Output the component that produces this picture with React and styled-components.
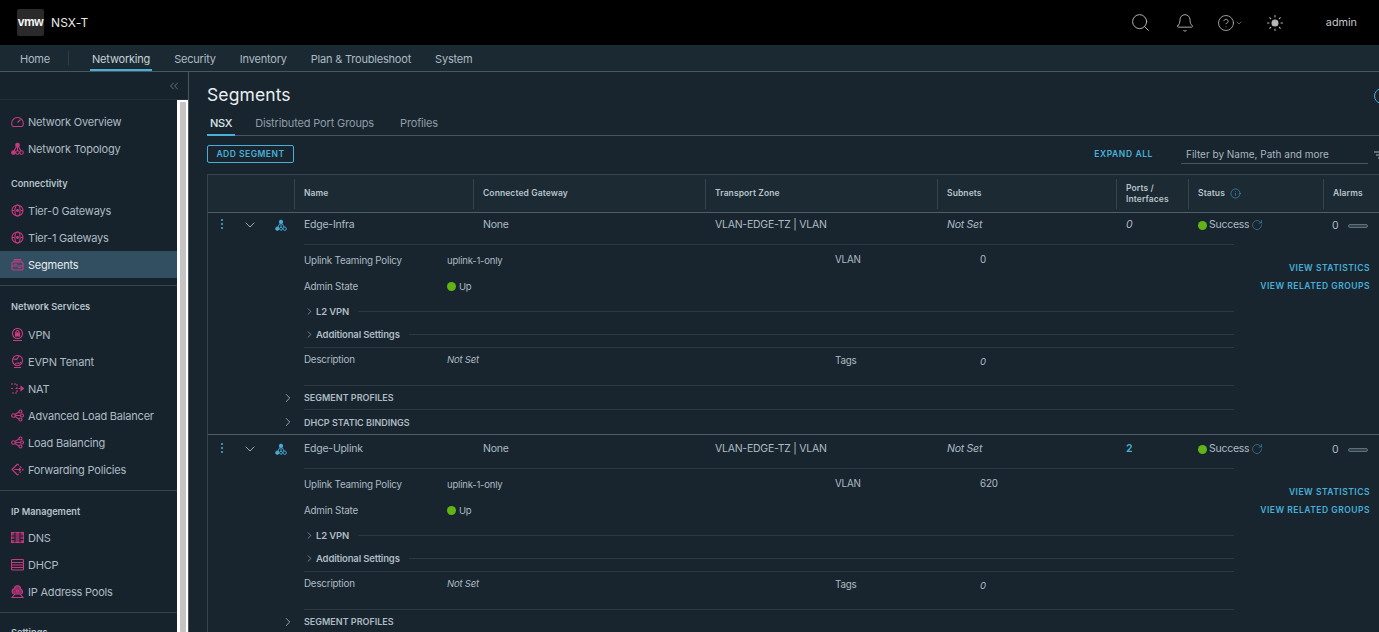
import React from "react";
import styled, { createGlobalStyle } from "styled-components";
import { Search, Bell, CircleHelp, Sun, ChevronDown, ChevronRight, ChevronsLeft, RotateCw, Info } from "lucide-react";

const Global = createGlobalStyle`
  html, body { margin: 0; padding: 0; height: 100%; overflow: hidden; background: #18252e; }
  * { box-sizing: border-box; }
  body { font-family: Inter, "Liberation Sans", sans-serif; color: #adbbc4; }
`;

const BLUE = "#49afd9";
const PINK = "#c63a80";

const Page = styled.div`display:flex;flex-direction:column;height:632px;width:1379px;overflow:hidden;`;
const TopBar = styled.header`height:45px;background:#000;display:flex;align-items:center;padding-left:17px;flex:none;`;
const Logo = styled.div`width:27px;height:27px;background:#2a2a2a;border-radius:2px;color:#f4f4f4;font:700 12px/27px "Liberation Sans",sans-serif;text-align:center;letter-spacing:-.4px;`;
const Product = styled.div`margin-left:7px;font-size:12px;color:#e8e8e8;letter-spacing:.1px;flex:1;`;
const TopIcon = styled.div`width:${p => p.$w}px;margin-left:${p => p.$gap || 0}px;display:flex;align-items:center;justify-content:center;color:#b8b8b8;flex:none;`;
const User = styled.div`font-size:10.8px;color:#c8c8c8;margin:0 22px 0 42px;flex:none;`;

const NavBar = styled.nav`height:27px;background:#1b2a32;border-bottom:1px solid #485660;display:flex;padding-left:20px;flex:none;`;
const NavItem = styled.div`
  position:relative;margin-right:${p => p.$gap}px;font-size:11px;letter-spacing:-.2px;line-height:28px;white-space:nowrap;color:${p => p.$active ? "#c6d2d9" : "#adbbc4"};
  ${p => p.$active && `&::after{content:"";position:absolute;left:-2px;right:-2px;bottom:0;height:2px;background:${BLUE};}`}
`;
const NavSep = styled.div`width:1px;height:14px;background:#2f3e47;margin:6px 23px 0 0;`;

const Body = styled.div`display:flex;flex:1;min-height:0;`;
const SideWrap = styled.aside`width:189px;flex:none;border-right:1px solid #485660;background:#17232c;display:flex;flex-direction:column;overflow:hidden;`;
const Collapse = styled.div`height:28px;flex:none;border-bottom:1px solid #233039;display:flex;justify-content:flex-end;align-items:center;padding-right:7px;color:#9aa9b3;`;
const SideBody = styled.div`flex:1;display:flex;min-height:0;`;
const SideList = styled.div`width:177px;flex:none;padding-top:8px;overflow:hidden;`;
const Track = styled.div`width:11px;background:#fff;padding:2px 2px 0 3px;flex:none;`;
const Thumb = styled.div`height:100%;background:#c4c4c4;border-radius:1px;`;
const Item = styled.div`
  height:27px;display:flex;align-items:center;padding-left:11px;font-size:11px;letter-spacing:-.2px;white-space:nowrap;
  color:${p => p.$active ? "#e6ecef" : "#adbbc4"};background:${p => p.$active ? "#324f62" : "transparent"};
`;
const ItemIcon = styled.svg`width:13px;height:13px;margin-right:4px;flex:none;fill:none;stroke:${PINK};stroke-width:1.1;`;
const GroupTitle = styled.div`height:${p => p.$h || 34}px;padding:${p => p.$pt || 12}px 0 0 11px;font-size:9.2px;font-weight:600;color:#b5c2ca;white-space:nowrap;`;
const Divider = styled.div`height:1px;background:#36444d;margin-top:${p => p.$top}px;`;

const Main = styled.main`flex:1;min-width:0;overflow:hidden;background:#18252e;padding-left:18px;`;
const Inner = styled.div`width:1240px;`;
const TitleRow = styled.div`height:46px;position:relative;`;
const Title = styled.h1`margin:0;font-size:17.5px;font-weight:400;color:#e8eef1;line-height:45px;letter-spacing:.1px;`;
const Ring = styled.div`position:absolute;left:1167px;top:16px;width:16px;height:16px;border:1.5px solid ${BLUE};border-radius:50%;`;
const Tabs = styled.div`display:flex;height:18px;border-bottom:1px solid #485660;width:1172px;`;
const Tab = styled.div`
  position:relative;font-size:11px;letter-spacing:-.15px;line-height:10px;height:17px;margin-right:${p => p.$gap}px;padding:0 ${p => p.$pad || 0}px;
  color:${p => p.$active ? "#dfe6ea" : "#8e9da7"};font-weight:${p => p.$active ? 500 : 400};
  ${p => p.$active && `&::after{content:"";position:absolute;left:0;right:0;bottom:-1px;height:2px;background:${BLUE};}`}
`;
const NsxLabel = styled.span`letter-spacing:-.3px;`;
const Toolbar = styled.div`height:38px;display:flex;align-items:center;width:1177px;`;
const AddButton = styled.button`height:18px;width:87px;padding:0;background:transparent;border:1px solid ${BLUE};border-radius:2px;color:${BLUE};font:600 8.5px Inter,sans-serif;letter-spacing:.5px;margin-top:-2px;`;
const ExpandAll = styled.div`margin-left:auto;color:${BLUE};font-size:8.5px;font-weight:600;letter-spacing:.6px;margin-top:-2px;`;
const FilterField = styled.div`width:187px;height:18px;margin-left:28px;border-bottom:1px solid #485660;font-size:10px;color:#aab7bf;padding:2px 0 0 5px;white-space:nowrap;`;
const FilterIcon = styled.svg`width:10px;height:10px;margin-left:6px;flex:none;stroke:#aab7bf;stroke-width:1;`;

const COLS = "87px 179px 232px 232px 179px 72px 135px 1fr";
const Table = styled.div`border:1px solid #36444d;border-bottom:0;border-right:0;width:1172px;`;
const HeadRow = styled.div`display:grid;grid-template-columns:${COLS};height:38px;align-items:center;background:#1b2a33;border-bottom:1px solid #4f5d66;`;
const HeadCell = styled.div`height:30px;border-right:${p => p.$last ? 0 : 1}px solid #36444d;display:flex;align-items:center;padding-left:9px;font-size:8.5px;font-weight:600;line-height:10.5px;color:#b8c4cb;letter-spacing:.1px;gap:5px;`;
const MainRow = styled.div`display:grid;grid-template-columns:${COLS};height:31px;margin-top:${p => p.$gap || 0}px;font-size:10.5px;letter-spacing:-.25px;color:#adbbc4;`;
const Cell = styled.div`padding:5px 0 0 9px;line-height:14px;white-space:nowrap;${p => p.$i && "font-style:italic;"}${p => p.$link && `color:${BLUE};font-weight:600;`}display:flex;align-items:flex-start;gap:2px;`;
const Actions = styled.div`display:flex;align-items:flex-start;padding:4px 0 0 11px;color:#b4c0c8;`;
const Dots = styled.div`width:3px;display:flex;flex-direction:column;gap:2px;margin:2px 18px 0 1.5px;& i{display:block;width:2px;height:2px;background:${BLUE};border-radius:50%;}`;
const HL = styled.div`height:1px;background:#2b3942;${p => p.$top ? `margin-top:${p.$top}px;` : ""}${p => p.$w ? `width:${p.$w}px;` : ""}`;
const Expanded = styled.div`display:grid;grid-template-columns:1026px 1fr;`;
const DetailCol = styled.div`padding-left:96px;`;
const KV = styled.div`display:grid;grid-template-columns:143px 388px 145px 1fr;height:${p => p.$h}px;align-items:${p => p.$top ? "start" : "center"};padding-top:${p => p.$pt || 0}px;white-space:nowrap;`;
const Label = styled.div`color:#adbbc4;font-size:9.8px;letter-spacing:-.2px;${p => p.$dy ? `transform:translateY(${p.$dy}px);` : ""}`;
const Val = styled.div`${p => p.$i && "font-style:italic;"}color:#adbbc4;font-size:9.5px;letter-spacing:-.2px;${p => p.$dy ? `transform:translateY(${p.$dy}px);` : ""}display:flex;align-items:center;gap:3px;`;
const Dot = styled.span`width:9px;height:9px;border-radius:50%;background:#60b515;flex:none;`;
const Fold = styled.div`display:flex;align-items:center;height:${p => p.$h}px;font-size:9.5px;letter-spacing:-.15px;font-weight:600;color:#adbbc4;white-space:nowrap;`;
const FoldLine = styled.div`flex:1;height:1px;background:#2b3942;margin-left:9px;`;
const SideLinks = styled.div`display:flex;flex-direction:column;align-items:flex-end;padding:19px 0 0 0;gap:9px;width:136px;`;
const Link = styled.div`color:${BLUE};font-size:8.5px;font-weight:600;letter-spacing:.5px;line-height:9px;white-space:nowrap;`;
const Section = styled.div`display:flex;align-items:center;height:${p => p.$h}px;padding-left:73px;font-size:9px;font-weight:600;color:#adbbc4;white-space:nowrap;`;
const SectionChev = styled.div`width:23px;display:flex;color:#b4c0c8;`;
const RowEnd = styled.div`height:1px;background:#4f5d66;`;
const Indent = styled.div`padding-left:96px;`;
const Pill = styled.div`width:20px;height:4px;border:1px solid #5f6f79;border-radius:2px;margin:5px 0 0 8px;background:#33434d;`;

const icons = {
  gauge: <><path d="M2.2 11.5h8.600a1.200 1.200 0 0 0 .9-.6A5.800 5.800 0 1 0 1.300 10.900a1.200 1.200 0 0 0 .9.6z" /><path d="M6.500 7.500l3-3" /></>,
  topo: <><circle cx="6.500" cy="3" r="1.800" fill={PINK} /><circle cx="2.500" cy="10.500" r="1.800" fill={PINK} /><circle cx="6.500" cy="10.500" r="1.800" /><circle cx="10.500" cy="10.500" r="1.800" /><path d="M5.500 4.500L3 9M7.500 4.500L10 9M6.500 5v4" /></>,
  gate: <><circle cx="6.500" cy="6.500" r="5.500" /><ellipse cx="6.500" cy="6.500" rx="2.600" ry="5.500" /><path d="M1 6.500h2M10 6.500h2" /><circle cx="6.500" cy="6.500" r=".9" fill={PINK} /></>,
  seg: <><rect x="1" y="4" width="11" height="8" rx="1" /><path d="M3 1.500h7M2 3h9M1 8h11M3 6.200h3M7 9.800h3" /></>,
  vpn: <><circle cx="6.500" cy="5.500" r="5" /><rect x="4.500" y="5" width="4" height="3" fill={PINK} /><path d="M5 5V4a1.500 1.500 0 0 1 3 0v1M2 12.500h9" /></>,
  evpn: <><circle cx="6.500" cy="5.500" r="5" /><path d="M2 4c2 0 3 1 4 0s1-2 2-3M4 10c0-2 2-2 3-2s2 1 3-1" /><path d="M3 12.500h7" /></>,
  nat: <><path d="M0 2h6v9H0M0 6.500h3M4.500 6.500H12" strokeDasharray="2 1" /><path d="M10 4.500L12.500 6.500 10 8.500z" fill={PINK} /></>,
  share: <><circle cx="2.500" cy="6.500" r="1.800" /><circle cx="9.500" cy="2.500" r="1.500" /><circle cx="11" cy="6.500" r="1.500" /><circle cx="9.500" cy="10.500" r="1.500" /><path d="M4 5.500L8 3M4.300 6.500H9.500M4 7.500L8 10" /></>,
  fwd: <><path d="M6.500 1L1 6.500l5.500 5.500" /><path d="M6.500 1l5.500 5.500-5.500 5.500" strokeDasharray="2 1.500" /><path d="M3.500 6.500h6M8 5l1.500 1.500L8 8" /></>,
  dns: <><rect x=".5" y="1.500" width="12" height="10" fill="#8c2e63" /><path d="M4 1.500v10M9 1.500v10M.5 5h3.500M.5 8.500h3.500M9 5h3.500M9 8.500h3.500" stroke="#17232c" /></>,
  dhcp: <><rect x=".5" y="1.500" width="12" height="10.500" rx="1" /><path d="M.5 4.500h12M.5 7h12M.5 9.500h12" /></>,
  pool: <><path d="M2.500 9a3 3 0 0 1 1-5.500 3 3 0 0 1 6 .5 3 3 0 0 1 1 5" fill="#8c2e63" /><path d="M1 12.500L4 9h5l3 3.500z" /><circle cx="6.500" cy="6" r="1" fill="#17232c" /></>,
};

const Ico = ({ n }) => <ItemIcon viewBox="0 0 13 13">{icons[n]}</ItemIcon>;
const Entry = ({ n, children, active }) => <Item $active={active}><Ico n={n} />{children}</Item>;

const SegIcon = () => (
  <svg width="12" height="12" viewBox="0 0 13 13" fill="none" stroke={BLUE} strokeWidth="1" style={{ marginTop: 2 }}>
    <circle cx="6.500" cy="3" r="1.800" fill={BLUE} />
    <circle cx="2.500" cy="10.500" r="1.800" fill={BLUE} />
    <circle cx="6.500" cy="10.500" r="1.600" />
    <circle cx="10.500" cy="10.500" r="1.800" />
    <path d="M5.500 4.500L3 9M7.500 4.500L10 9M6.500 5v4" />
  </svg>
);

const Segment = ({ name, ports, portsLink, vlan, gap }) => (
  <>
    <MainRow $gap={gap}>
      <Actions>
        <Dots><i /><i /><i /></Dots>
        <ChevronDown size={16} strokeWidth={1.300} style={{ marginRight: 17 }} />
        <SegIcon />
      </Actions>
      <Cell>{name}</Cell>
      <Cell>None</Cell>
      <Cell>VLAN-EDGE-TZ | VLAN</Cell>
      <Cell $i>Not Set</Cell>
      <Cell $i={!portsLink} $link={portsLink}>{ports}</Cell>
      <Cell><Dot style={{ marginTop: 3 }} />Success<RotateCw size={12} color="#3f87a8" strokeWidth={1.300} style={{ marginTop: 1 }} /></Cell>
      <Cell style={{ paddingTop: 6, paddingLeft: 8 }}>0<Pill /></Cell>
    </MainRow>
    <Indent><HL $w={930} /></Indent>
    <Expanded>
      <DetailCol>
        <KV $h={28} $pt={3}>
          <Label>Uplink Teaming Policy</Label><Val>uplink-1-only</Val>
          <Label $dy={-1.500}>VLAN</Label><Label $dy={-1.500}>{vlan}</Label>
        </KV>
        <KV $h={26}><Label>Admin State</Label><Val><Dot />Up</Val></KV>
        <Fold $h={24}><ChevronRight size={11} strokeWidth={1.300} style={{ marginRight: 1 }} />L2 VPN<FoldLine /></Fold>
        <Fold $h={22}><ChevronRight size={11} strokeWidth={1.300} style={{ marginRight: 1 }} />Additional Settings<FoldLine /></Fold>
        <HL $top={2} />
        <KV $h={37} $top $pt={6}>
          <Label>Description</Label><Val $i>Not Set</Val>
          <Label $dy={1}>Tags</Label><Val $i $dy={2}>0</Val>
        </KV>
      </DetailCol>
      <SideLinks>
        <Link>VIEW STATISTICS</Link>
        <Link>VIEW RELATED GROUPS</Link>
      </SideLinks>
    </Expanded>
    <Indent><HL $w={930} /></Indent>
    <Section $h={23}><SectionChev><ChevronRight size={14} strokeWidth={1.400} /></SectionChev>SEGMENT PROFILES</Section>
  </>
);

const Dhcp = () => (
  <>
    <Indent><HL $w={930} /></Indent>
    <Section $h={24}><SectionChev><ChevronRight size={14} strokeWidth={1.400} /></SectionChev>DHCP STATIC BINDINGS</Section>
    <RowEnd />
  </>
);

export default function App() {
  return (
    <Page>
      <Global />
      <TopBar>
        <Logo>vmw</Logo>
        <Product>NSX-T</Product>
        <TopIcon $w={22}><Search size={21} strokeWidth={1.100} /></TopIcon>
        <TopIcon $w={20} $gap={23}><Bell size={20} strokeWidth={1.100} /></TopIcon>
        <TopIcon $w={26} $gap={22}><CircleHelp size={18} strokeWidth={1.100} /><ChevronDown size={8} strokeWidth={1.500} /></TopIcon>
        <TopIcon $w={18} $gap={23}><Sun size={20} strokeWidth={1.400} fill="#b8b8b8" /></TopIcon>
        <User>admin</User>
      </TopBar>
      <NavBar>
        <NavItem $gap={18}>Home</NavItem>
        <NavSep />
        <NavItem $active $gap={24}>Networking</NavItem>
        <NavItem $gap={24}>Security</NavItem>
        <NavItem $gap={24}>Inventory</NavItem>
        <NavItem $gap={24}>Plan &amp; Troubleshoot</NavItem>
        <NavItem $gap={24}>System</NavItem>
      </NavBar>
      <Body>
        <SideWrap>
          <Collapse><ChevronsLeft size={14} strokeWidth={1} /></Collapse>
          <SideBody>
            <SideList>
              <Entry n="gauge">Network Overview</Entry>
              <Entry n="topo">Network Topology</Entry>
              <GroupTitle $h={35} $pt={16}>Connectivity</GroupTitle>
              <Entry n="gate">Tier-0 Gateways</Entry>
              <Entry n="gate">Tier-1 Gateways</Entry>
              <Entry n="seg" active>Segments</Entry>
              <Divider $top={7} />
              <GroupTitle $h={35} $pt={15}>Network Services</GroupTitle>
              <Entry n="vpn">VPN</Entry>
              <Entry n="evpn">EVPN Tenant</Entry>
              <Entry n="nat">NAT</Entry>
              <Entry n="share">Advanced Load Balancer</Entry>
              <Entry n="share">Load Balancing</Entry>
              <Entry n="fwd">Forwarding Policies</Entry>
              <Divider $top={7} />
              <GroupTitle $h={33} $pt={15}>IP Management</GroupTitle>
              <Entry n="dns">DNS</Entry>
              <Entry n="dhcp">DHCP</Entry>
              <Entry n="pool">IP Address Pools</Entry>
              <Divider $top={7} />
              <GroupTitle $pt={14}>Settings</GroupTitle>
            </SideList>
            <Track><Thumb /></Track>
          </SideBody>
        </SideWrap>
        <Main>
          <Inner>
            <TitleRow><Title>Segments</Title><Ring /></TitleRow>
            <Tabs>
              <Tab $active $gap={20} $pad={3}><NsxLabel>NSX</NsxLabel></Tab>
              <Tab $gap={26}>Distributed Port Groups</Tab>
              <Tab $gap={0}>Profiles</Tab>
            </Tabs>
            <Toolbar>
              <AddButton>ADD SEGMENT</AddButton>
              <ExpandAll>EXPAND ALL</ExpandAll>
              <FilterField>Filter by Name, Path and more</FilterField>
              <FilterIcon viewBox="0 0 10 10"><path d="M0 2h10M2 5h8M4 8h6" /></FilterIcon>
            </Toolbar>
            <Table>
              <HeadRow>
                <HeadCell />
                <HeadCell>Name</HeadCell>
                <HeadCell>Connected Gateway</HeadCell>
                <HeadCell>Transport Zone</HeadCell>
                <HeadCell>Subnets</HeadCell>
                <HeadCell>Ports /<br />Interfaces</HeadCell>
                <HeadCell>Status<Info size={11} color="#49a0c8" strokeWidth={1.300} /></HeadCell>
                <HeadCell $last>Alarms</HeadCell>
              </HeadRow>
              <Segment name="Edge-Infra" ports="0" vlan="0" />
              <Dhcp />
              <Segment name="Edge-Uplink" ports="2" portsLink vlan="620" gap={2} />
            </Table>
          </Inner>
        </Main>
      </Body>
    </Page>
  );
}
